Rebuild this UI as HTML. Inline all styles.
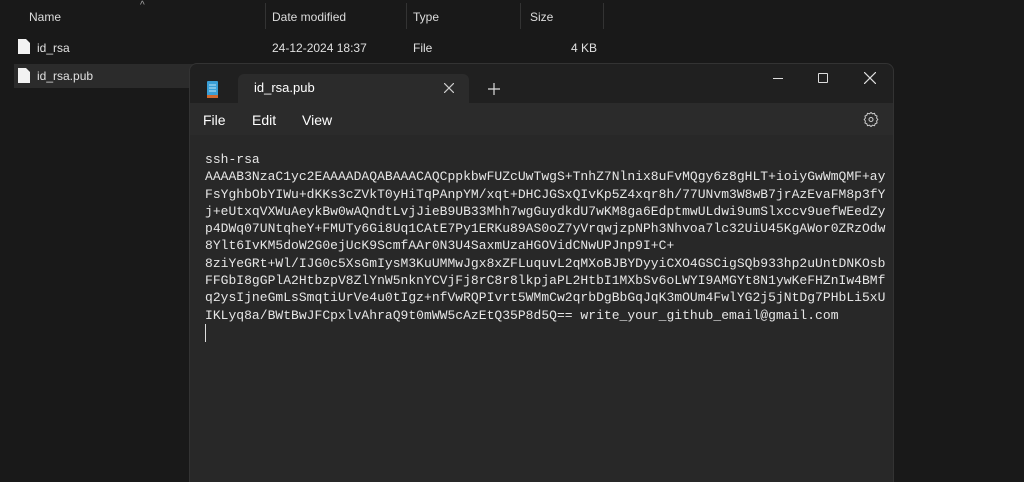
<!DOCTYPE html>
<html><head><meta charset="utf-8"><style>
*{margin:0;padding:0;box-sizing:border-box}
html,body{width:1024px;height:482px;overflow:hidden}
body{background:#191919;position:relative;font-family:"Liberation Sans",sans-serif;color:#fff}
.a{position:absolute;white-space:nowrap}
.hd{font-size:12px;color:#dcdcdc;top:10px}
.sep{position:absolute;top:3px;width:1px;height:26px;background:#333}
.r{font-size:12px;color:#e0e0e0}
.win{position:absolute;left:189px;top:63px;width:705px;height:419px;background:#202020;border:1px solid #333;border-bottom:none;border-radius:8px 8px 0 0;overflow:hidden}
.tab{position:absolute;left:48px;top:10px;width:231px;height:32px;background:#2b2b2b;border-radius:6px 6px 0 0}
.menu{position:absolute;left:0;top:39px;width:705px;height:32px;background:#2b2b2b}
.ed{position:absolute;left:0;top:71px;width:705px;height:360px;background:#282828}
pre{position:absolute;left:15px;top:16px;font-family:"Liberation Mono",monospace;font-size:13px;letter-spacing:0.02px;line-height:17.3px;color:#e6e6e6}
</style></head><body>
<div class="a hd" style="left:29px">Name</div>
<div class="a" style="left:140px;top:0;font-size:10px;color:#aaa">^</div>
<div class="sep" style="left:265px"></div>
<div class="a hd" style="left:272px">Date modified</div>
<div class="sep" style="left:406px"></div>
<div class="a hd" style="left:413px">Type</div>
<div class="sep" style="left:520px"></div>
<div class="a hd" style="left:530px">Size</div>
<div class="sep" style="left:603px"></div>

<svg class="a" style="left:18px;top:39px" width="12" height="15"><path d="M0 0H8L12 4V15H0Z" fill="#f2f2f2"/></svg>
<div class="a r" style="left:37px;top:41px">id_rsa</div>
<div class="a r" style="left:272px;top:41px">24-12-2024 18:37</div>
<div class="a r" style="left:413px;top:41px">File</div>
<div class="a r" style="left:571px;top:41px">4 KB</div>

<div class="a" style="left:14px;top:64px;width:180px;height:24px;background:#2b2b2b"></div>
<svg class="a" style="left:18px;top:68px" width="12" height="15"><path d="M0 0H8L12 4V15H0Z" fill="#f2f2f2"/></svg>
<div class="a r" style="left:37px;top:69px">id_rsa.pub</div>

<div class="win">
 <svg class="a" style="left:16px;top:16px" width="13" height="19"><rect x="1" y="1" width="11" height="15" fill="#3a9fd6" rx="1"/><rect x="1" y="15" width="11" height="3" fill="#d0692e"/><path d="M3 5H10M3 8H10M3 11H10" stroke="#bfe4f7" stroke-width="1"/></svg>
 <div class="tab"></div>
 <div class="a" style="left:64px;top:16px;font-size:13px;color:#fff">id_rsa.pub</div>
 <svg class="a" style="left:254px;top:19px" width="10" height="10"><path d="M0 0L10 10M10 0L0 10" stroke="#ccc" stroke-width="1.2"/></svg>
 <svg class="a" style="left:298px;top:19px" width="12" height="12"><path d="M6 0V12M0 6H12" stroke="#ddd" stroke-width="1.2"/></svg>
 <div class="a" style="left:583px;top:14px;width:10px;height:1px;background:#ddd"></div>
 <div class="a" style="left:628px;top:9px;width:10px;height:10px;border:1.2px solid #ddd;border-radius:1px"></div>
 <svg class="a" style="left:674px;top:8px" width="12" height="12"><path d="M0 0L12 12M12 0L0 12" stroke="#ddd" stroke-width="1.2"/></svg>
 <div class="menu">
  <div class="a" style="left:13px;top:9px;font-size:14px">File</div>
  <div class="a" style="left:62px;top:9px;font-size:14px">Edit</div>
  <div class="a" style="left:112px;top:9px;font-size:14px">View</div>
  <svg class="a" style="left:673px;top:8px" width="16" height="16" viewBox="0 0 16 16"><path d="M8 1.5L9.5 2.8L11.5 2.3L12.2 4.2L14 5L13.6 7L14.8 8.5L13.6 10L14 12L12.2 12.8L11.5 14.7L9.5 14.2L8 15.5L6.5 14.2L4.5 14.7L3.8 12.8L2 12L2.4 10L1.2 8.5L2.4 7L2 5L3.8 4.2L4.5 2.3L6.5 2.8Z" fill="none" stroke="#ccc" stroke-width="1"/><circle cx="8" cy="8.5" r="2" fill="none" stroke="#ccc"/></svg>
 </div>
 <div class="ed">
<pre>ssh-rsa
AAAAB3NzaC1yc2EAAAADAQABAAACAQCppkbwFUZcUwTwgS+TnhZ7Nlnix8uFvMQgy6z8gHLT+ioiyGwWmQMF+ay
FsYghbObYIWu+dKKs3cZVkT0yHiTqPAnpYM/xqt+DHCJGSxQIvKp5Z4xqr8h/77UNvm3W8wB7jrAzEvaFM8p3fY
j+eUtxqVXWuAeykBw0wAQndtLvjJieB9UB33Mhh7wgGuydkdU7wKM8ga6EdptmwULdwi9umSlxccv9uefWEedZy
p4DWq07UNtqheY+FMUTy6Gi8Uq1CAtE7Py1ERKu89AS0oZ7yVrqwjzpNPh3Nhvoa7lc32UiU45KgAWor0ZRzOdw
8Ylt6IvKM5doW2G0ejUcK9ScmfAAr0N3U4SaxmUzaHGOVidCNwUPJnp9I+C+
8ziYeGRt+Wl/IJG0c5XsGmIysM3KuUMMwJgx8xZFLuquvL2qMXoBJBYDyyiCXO4GSCigSQb933hp2uUntDNKOsb
FFGbI8gGPlA2HtbzpV8ZlYnW5nknYCVjFj8rC8r8lkpjaPL2HtbI1MXbSv6oLWYI9AMGYt8N1ywKeFHZnIw4BMf
q2ysIjneGmLsSmqtiUrVe4u0tIgz+nfVwRQPIvrt5WMmCw2qrbDgBbGqJqK3mOUm4FwlYG2j5jNtDg7PHbLi5xU
IKLyq8a/BWtBwJFCpxlvAhraQ9t0mWW5cAzEtQ35P8d5Q== write_your_github_email@gmail.com</pre>
  <div class="a" style="left:15px;top:189px;width:1px;height:18px;background:#ddd"></div>
 </div>
</div>
</body></html>
